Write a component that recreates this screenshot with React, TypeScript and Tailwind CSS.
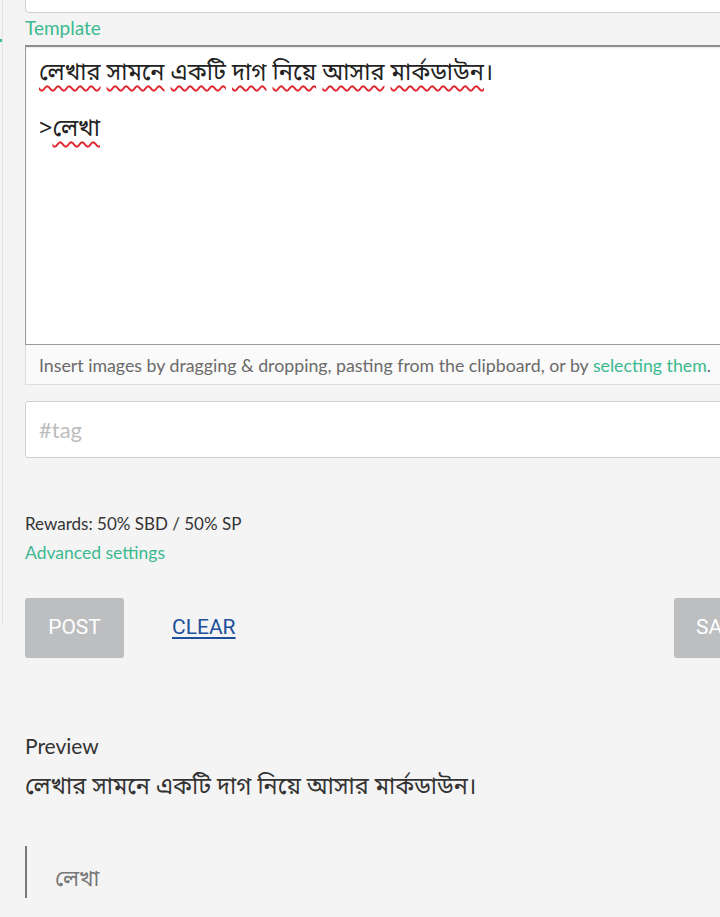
const latin = "font-['Lato','Noto_Sans','Noto_Sans_Bengali',sans-serif]";
const bengali = "font-['Noto_Sans_Bengali','Noto_Sans','Lato',sans-serif]";

function Squiggle({ children }: { children: string }) {
  return (
    <span className="underline decoration-wavy decoration-[#e0242b] decoration-[1.5px] underline-offset-[5px]">
      {children}
    </span>
  );
}

export default function App() {
  const words = ["লেখার", "সামনে", "একটি", "দাগ", "নিয়ে", "আসার", "মার্কডাউন"];
  return (
    <div className={`relative w-[720px] h-[917px] overflow-hidden bg-[#f4f4f4] text-[#333] ${latin}`}>
      <div className="absolute left-[2px] top-0 h-[625px] w-px bg-[#e4e4e4]" />
      <div className="absolute left-0 top-[39px] h-[3px] w-[2px] bg-[#3cbf95]" />
      <div className="ml-[25px] w-[800px]">
        <div className="-mt-[20px] h-[33px] rounded-b-[4px] border border-[#cfcfcf] bg-white" />
        <div className="mt-[4px] text-[19px] leading-[22px] text-[#3cb98f]">Template</div>
        <div className="mt-[6px] h-[300px] border border-[#9a9a9a] border-t-2 border-t-[#8e8e8e] bg-white px-[13px] pt-[12px] shadow-[inset_0_1px_2px_rgba(0,0,0,0.1)]">
          <div className={`${bengali} text-[23.5px] leading-[30px] text-[#222]`}>
            {words.map((w, i) => (
              <span key={i}>
                <Squiggle>{w}</Squiggle>
                {i < words.length - 1 ? " " : ""}
              </span>
            ))}
            ।
          </div>
          <div className={`${bengali} mt-[26px] text-[23.5px] leading-[30px] text-[#222]`}>
            &gt;<Squiggle>লেখা</Squiggle>
          </div>
        </div>
        <div className="h-[40px] border border-t-0 border-[#dcdcdc] bg-[#fafafa] px-[13px] text-[17.75px] leading-[40px] text-[#6a6a6a]">
          Insert images by dragging &amp; dropping, pasting from the clipboard, or by{" "}
          <span className="text-[#3cb98f]">selecting them</span>.
        </div>
        <div className="mt-[16px] h-[57px] rounded-[3px] border border-[#cfcfcf] bg-white px-[13px] text-[22px] leading-[55px] text-[#bdbdbd]">
          #tag
        </div>
        <div className="mt-[55px] text-[17px] leading-[22px] text-[#333]">Rewards: 50% SBD / 50% SP</div>
        <div className="mt-[7px] text-[17.5px] leading-[22px] text-[#3cb98f]">Advanced settings</div>
        <div className="mt-[34px] flex items-center w-[769px]">
          <div className="flex h-[60px] w-[99px] items-center justify-center rounded-[3px] bg-[#bdbec0] font-['Roboto',sans-serif] text-[21px] text-white">
            POST
          </div>
          <div className="ml-[48px] font-['Roboto',sans-serif] text-[21px] text-[#1d4f9c] underline underline-offset-[3px]">
            CLEAR
          </div>
          <div className="ml-auto flex h-[60px] w-[120px] items-center rounded-[3px] bg-[#bdbec0] pl-[22px] font-['Roboto',sans-serif] text-[21px] text-white">
            SAVE
          </div>
        </div>
        <div className="mt-[75px] text-[21px] leading-[26px] text-[#333]">Preview</div>
        <div className={`${bengali} mt-[14px] text-[23.4px] leading-[32px] text-[#333]`}>
          লেখার সামনে একটি দাগ নিয়ে আসার মার্কডাউন।
        </div>
        <div className="mt-[41px] flex h-[52px] items-end border-l-2 border-[#7a7a7a] pl-[28px] pb-[2px]">
          <span className={`${bengali} text-[22px] leading-[30px] text-[#777]`}>লেখা</span>
        </div>
      </div>
    </div>
  );
}
